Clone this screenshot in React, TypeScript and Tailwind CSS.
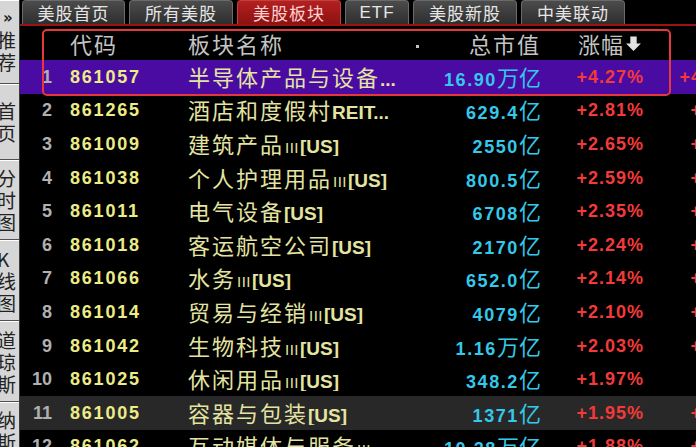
import React from 'react';

type Row = { n: number; code: string; name: string; cap: string; unit: string; chg: string; next: string };

const rows: Row[] = [
  { n: 1, code: '861057', name: '半导体产品与设备...', cap: '16.90', unit: '万亿', chg: '+4.27%', next: '+41.56%' },
  { n: 2, code: '861265', name: '酒店和度假村REIT...', cap: '629.4', unit: '亿', chg: '+2.81%', next: '+5.12%' },
  { n: 3, code: '861009', name: '建筑产品III[US]', cap: '2550', unit: '亿', chg: '+2.65%', next: '+3.48%' },
  { n: 4, code: '861038', name: '个人护理用品III[US]', cap: '800.5', unit: '亿', chg: '+2.59%', next: '+4.06%' },
  { n: 5, code: '861011', name: '电气设备[US]', cap: '6708', unit: '亿', chg: '+2.35%', next: '+3.91%' },
  { n: 6, code: '861018', name: '客运航空公司[US]', cap: '2170', unit: '亿', chg: '+2.24%', next: '+6.37%' },
  { n: 7, code: '861066', name: '水务III[US]', cap: '652.0', unit: '亿', chg: '+2.14%', next: '+1.85%' },
  { n: 8, code: '861014', name: '贸易与经销III[US]', cap: '4079', unit: '亿', chg: '+2.10%', next: '+2.73%' },
  { n: 9, code: '861042', name: '生物科技III[US]', cap: '1.16', unit: '万亿', chg: '+2.03%', next: '+3.22%' },
  { n: 10, code: '861025', name: '休闲用品III[US]', cap: '348.2', unit: '亿', chg: '+1.97%', next: '' },
  { n: 11, code: '861005', name: '容器与包装[US]', cap: '1371', unit: '亿', chg: '+1.95%', next: '+2.64%' },
  { n: 12, code: '861062', name: '互动媒体与服务III...', cap: '10.28', unit: '万亿', chg: '+1.88%', next: '+4.15%' },
];

const tabs = [
  { label: '美股首页', w: 'w-[103px]' },
  { label: '所有美股', w: 'w-[104px]' },
  { label: '美股板块', w: 'w-[104px]', active: true },
  { label: 'ETF', w: 'w-[64px]' },
  { label: '美股新股', w: 'w-[104px]' },
  { label: '中美联动', w: 'w-[104px]' },
];

const side = [
  { h: 'h-[84px]', chars: ['推', '荐'], top: true },
  { h: 'h-[76px]', chars: ['首', '页'] },
  { h: 'h-[80px]', chars: ['分', '时', '图'] },
  { h: 'h-[81px]', chars: ['K', '线', '图'] },
  { h: 'h-[81px]', chars: ['道', '琼', '斯'] },
  { h: 'h-[80px]', chars: ['纳', '斯', '达'] },
];

function Name({ text }: { text: string }) {
  const parts = text.split(/(III|\[US\]|REIT|\.\.\.)/).filter(Boolean);
  return (
    <>
      {parts.map((p, i) => {
        if (p === 'III')
          return (
            <span key={i} className="font-['Liberation_Sans',sans-serif] text-[15px] tracking-[0.5px] ml-[1px] mr-[1px]">
              III
            </span>
          );
        if (p === '[US]' || p === 'REIT' || p === '...')
          return (
            <span key={i} className="font-['Liberation_Sans',sans-serif] font-bold text-[19px]">
              {p}
            </span>
          );
        return (
          <span key={i} className="text-[22px] tracking-[2px]">
            {p}
          </span>
        );
      })}
    </>
  );
}

function ArrowDown() {
  return (
    <svg width="17" height="17" viewBox="0 0 16 16" className="ml-[1px]">
      <path d="M5 1.5h6v6.5h4l-7 7-7-7h4z" fill="#e2e2e2" />
    </svg>
  );
}

export default function App() {
  return (
    <div className="relative flex w-[696px] h-[447px] overflow-hidden bg-black font-['Noto_Sans_CJK_SC',sans-serif]">
      {/* Sidebar */}
      <div className="w-[20px] shrink-0 flex flex-col bg-[#d6d6d6] border-r border-[#3a3a3a] overflow-hidden">
        {side.map((s, i) => (
          <div
            key={i}
            className={`${s.h} shrink-0 flex flex-col items-start justify-center border-t border-t-white border-b border-b-[#505050] overflow-hidden`}
          >
            {s.top && (
              <div className="text-[15px] leading-[14px] font-bold text-[#222] pl-[3px] mb-[4px] font-['DejaVu_Sans',sans-serif]">»</div>
            )}
            {s.chars.map((c, j) => (
              <div key={j} className="-ml-[3px] text-[19px] leading-[22px] text-[#222] whitespace-nowrap">
                {c}
              </div>
            ))}
          </div>
        ))}
      </div>

      {/* Main */}
      <div className="flex-1 min-w-0 flex flex-col overflow-hidden">
        {/* Tabs */}
        <div className="flex h-[24px] items-end pl-[2px] gap-[4px]">
          {tabs.map((t) => (
            <div
              key={t.label}
              className={`${t.w} h-[24px] shrink-0 flex items-center justify-center rounded-t-[4px] border border-b-0 text-[17px] leading-none tracking-[1px] ${
                t.active
                  ? 'bg-gradient-to-b from-[#b42020] to-[#8c1212] border-[#c04040] text-[#ffd0d0]'
                  : 'bg-gradient-to-b from-[#4c4c4c] to-[#2e2e2e] border-[#6a6a6a] text-[#e6e6e6]'
              } ${t.label === 'ETF' ? "font-['Liberation_Sans',sans-serif] tracking-[0px]" : ''}`}
            >
              {t.label}
            </div>
          ))}
        </div>
        <div className="h-[2px] bg-[#9a1414] shrink-0" />

        {/* Header */}
        <div className="flex h-[34px] shrink-0 items-center text-[#c4c4c4] text-[22px] leading-none tracking-[2px] whitespace-nowrap">
          <div className="w-[32px] shrink-0" />
          <div className="w-[18px] shrink-0" />
          <div className="w-[118px] shrink-0">代码</div>
          <div className="w-[250px] shrink-0 flex items-center justify-between pr-[19px]">
            <span>板块名称</span>
            <span className="block w-[3px] h-[3px] bg-[#c4c4c4] mt-[6px]" />
          </div>
          <div className="w-[103px] shrink-0 text-right -mr-[2px]">总市值</div>
          <div className="w-[103px] shrink-0 flex items-center justify-end">
            <span className="tracking-[1px]">涨幅</span>
            <ArrowDown />
          </div>
        </div>

        {/* Rows */}
        {rows.map((r) => (
          <div
            key={r.n}
            className={`flex h-[33.6px] shrink-0 items-center whitespace-nowrap leading-none ${
              r.n === 1 ? 'bg-[#4a0ba2]' : r.n === 11 ? 'bg-[#282828]' : ''
            }`}
          >
            <div className="w-[32px] shrink-0 text-right font-['Liberation_Sans',sans-serif] font-bold text-[18px] text-[#b0b0b0]">
              {r.n}
            </div>
            <div className="w-[18px] shrink-0" />
            <div className="w-[118px] shrink-0 font-['Liberation_Sans',sans-serif] font-bold text-[18px] tracking-[1.8px] text-[#ecec86]">
              {r.code}
            </div>
            <div className="w-[250px] shrink-0 text-[#e4e4a2] overflow-hidden">
              <Name text={r.name} />
            </div>
            <div className="w-[103px] shrink-0 text-right text-[#34c8ea]">
              <span className="font-['Liberation_Sans',sans-serif] font-bold text-[18px] tracking-[1.6px]">{r.cap}</span>
              <span className="text-[22px]">{r.unit}</span>
            </div>
            <div className="w-[103px] shrink-0 text-right font-['Liberation_Sans',sans-serif] font-bold text-[18px] tracking-[1px] text-[#f23a3a]">
              {r.chg}
            </div>
            <div className="w-[114px] shrink-0 text-right font-['Liberation_Sans',sans-serif] font-bold text-[18px] tracking-[1px] text-[#f23a3a]">
              {r.next}
            </div>
          </div>
        ))}
      </div>

      {/* Annotation box */}
      <div className="absolute left-[42px] top-[29px] w-[629px] h-[67px] border-2 border-[#e6383c] rounded-[5px] pointer-events-none" />
    </div>
  );
}
